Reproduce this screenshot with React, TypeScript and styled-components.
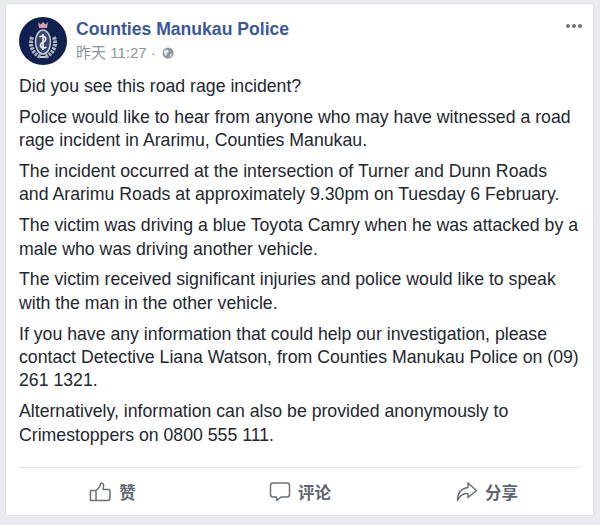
import React from "react";
import styled, { createGlobalStyle } from "styled-components";

const Global = createGlobalStyle`
  html, body { margin: 0; padding: 0; background: #e9ebee; }
  body { font-family: "Liberation Sans", "Noto Sans CJK SC", sans-serif; }
`;

const Page = styled.div`
  width: 600px;
  height: 525px;
  box-sizing: border-box;
  padding: 3px 6px 9px 5px;
  overflow: hidden;
`;

const Card = styled.article`
  height: 100%;
  box-sizing: border-box;
  background: #fff;
  border: 1px solid #dfe0e4;
  border-radius: 3px;
  padding: 13px 13px 0;
  display: flex;
  flex-direction: column;
`;

const Header = styled.header`
  display: flex;
  align-items: flex-start;
  gap: 9px;
  position: relative;
`;

const Avatar = styled.svg`
  width: 48px;
  height: 48px;
  flex: none;
`;

const HeaderText = styled.div`
  display: flex;
  flex-direction: column;
  gap: 2px;
  padding-top: 1px;
`;

const PageName = styled.div`
  font-size: 17.6px;
  font-weight: 700;
  line-height: 22px;
  color: #3b5998;
`;

const Meta = styled.div`
  display: flex;
  align-items: center;
  gap: 6px;
  font-size: 15px;
  line-height: 22px;
  color: #8f949c;
`;

const More = styled.div`
  position: absolute;
  right: -2px;
  top: 7px;
  display: flex;
  gap: 2px;
`;

const Dot = styled.span`
  width: 4px;
  height: 4px;
  border-radius: 50%;
  background: #6f7278;
`;

const Body = styled.div`
  margin-top: 10px;
  font-size: 17.7px;
  line-height: 23.4px;
  color: #23272f;
`;

const Paragraph = styled.p`
  margin: 0 0 7.4px;
  white-space: nowrap;
`;

const Actions = styled.footer`
  margin-top: auto;
  border-top: 1px solid #e5e6e9;
  height: 47px;
  display: grid;
  grid-template-columns: repeat(3, 1fr);
  align-items: center;
`;

const Action = styled.button`
  border: 0;
  background: none;
  padding: 0;
  font: inherit;
  font-size: 16.5px;
  font-weight: 700;
  color: #5f6670;
  display: flex;
  align-items: center;
  justify-content: center;
  gap: 7px;
`;

const Icon = styled.svg`
  width: 23px;
  height: 23px;
  flex: none;
  fill: none;
  stroke: #6b7079;
  stroke-width: 1.5;
  stroke-linejoin: round;
  stroke-linecap: round;
`;

const paragraphs = [
  <>Did you see this road rage incident?</>,
  <>Police would like to hear from anyone who may have witnessed a road<br />rage incident in Ararimu, Counties Manukau.</>,
  <>The incident occurred at the intersection of Turner and Dunn Roads<br />and Ararimu Roads at approximately 9.30pm on Tuesday 6 February.</>,
  <>The victim was driving a blue Toyota Camry when he was attacked by a<br />male who was driving another vehicle.</>,
  <>The victim received significant injuries and police would like to speak<br />with the man in the other vehicle.</>,
  <>If you have any information that could help our investigation, please<br />contact Detective Liana Watson, from Counties Manukau Police on (09)<br />261 1321.</>,
  <>Alternatively, information can also be provided anonymously to<br />Crimestoppers on 0800 555 111.</>,
];

const Crest = () => (
  <Avatar viewBox="0 0 48 48" aria-hidden="true">
    <circle cx="24" cy="24" r="24" fill="#10204f" />
    <path d="M19 5l2.500 2.500L24 5l2.500 2.500L29 5l-1 6h-8z" fill="#d9a0a6" />
    <path d="M13 20c-3 9 1 17 9 20M35 20c3 9-1 17-9 20" fill="none" stroke="#aeb4bf" strokeWidth="4" strokeDasharray="2.5 1" />
    <ellipse cx="24" cy="25" rx="7.5" ry="12" fill="#39456b" stroke="#c7ccd4" strokeWidth="1.5" />
    <path d="M20.500 20c3-2 7-.5 6 3s-5 1.500-5 5 3.500 3.500 6 2M24 17v16" fill="none" stroke="#eef0f3" strokeWidth="1.6" />
    <rect x="21" y="39" width="6" height="2" fill="#c7ccd4" />
  </Avatar>
);

const Globe = () => (
  <svg width="12" height="12" viewBox="0 0 12 12" aria-hidden="true">
    <circle cx="6" cy="6" r="5.5" fill="#8f949c" />
    <path d="M3 2.500l3 .5 1 2-2 1.500-1 3L2.500 7 1.500 5zM8 7l2-.5-1 3-1.500.5z" fill="#e3e5e8" />
  </svg>
);

export default function App() {
  return (
    <>
      <Global />
      <Page>
        <Card>
          <Header>
            <Crest />
            <HeaderText>
              <PageName>Counties Manukau Police</PageName>
              <Meta>
                <span>昨天 11:27 ·</span>
                <Globe />
              </Meta>
            </HeaderText>
            <More><Dot /><Dot /><Dot /></More>
          </Header>
          <Body>
            {paragraphs.map((p, i) => <Paragraph key={i}>{p}</Paragraph>)}
          </Body>
          <Actions>
            <Action>
              <Icon viewBox="0 0 23 23"><path d="M7 10.500H1.500v10H7zM7 20.500h11.500c1.500 0 2.500-1 2.500-2.500v-6.500c0-1.200-.8-2-2-2h-5c.5-2 .8-3.500.5-5-.3-1.500-2.500-2-3-.5-.3 2-1.500 4.500-4.500 6.500z" /></Icon>
              赞
            </Action>
            <Action>
              <Icon viewBox="0 0 23 23"><path d="M5 3h14c1.500 0 2.500 1 2.500 2.500v9c0 1.500-1 2.500-2.500 2.500h-6l-4 3.500-.5-3.500H5c-1.500 0-2.500-1-2.500-2.500v-9C2.500 4 3.500 3 5 3z" /></Icon>
              评论
            </Action>
            <Action>
              <Icon viewBox="0 0 23 23"><path d="M13 3l8.500 7.500-8.500 7v-4c-4.500-.5-8 1.500-10.500 7 0-7 3.500-12 10.500-13z" /></Icon>
              分享
            </Action>
          </Actions>
        </Card>
      </Page>
    </>
  );
}
